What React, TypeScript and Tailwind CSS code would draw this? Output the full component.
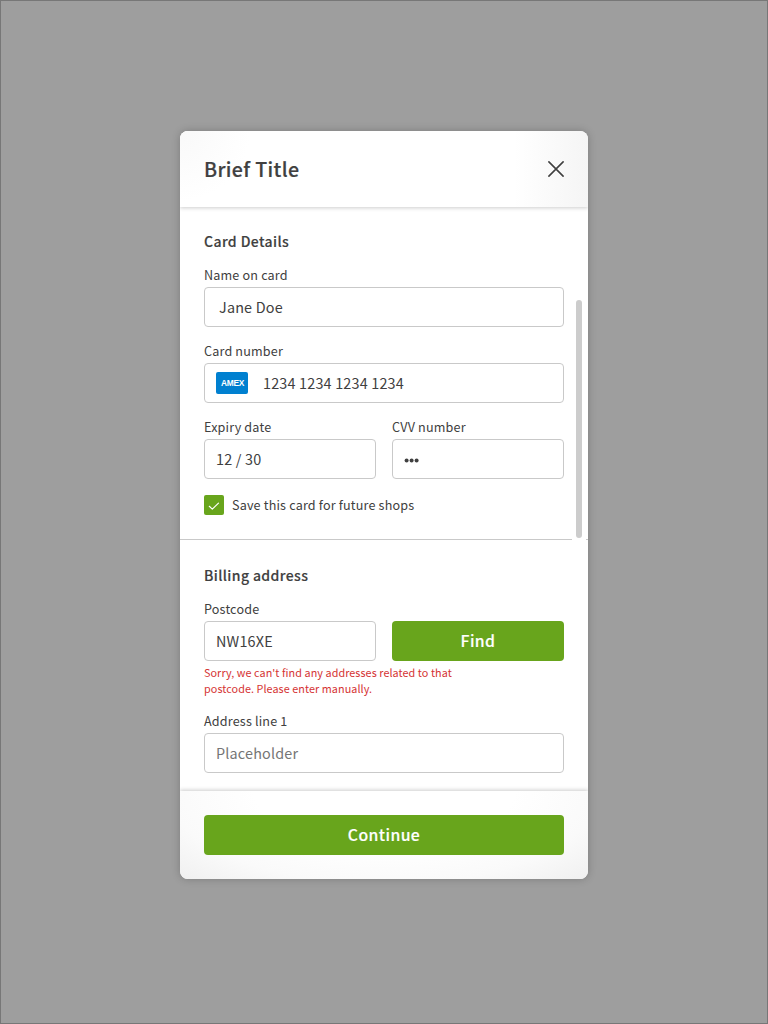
import type { ReactNode } from "react";

function Label({ children }: { children: ReactNode }) {
  return (
    <div className="h-[23px] text-[12.6px] leading-[22px] tracking-[0.17px] whitespace-nowrap">{children}</div>
  );
}

function Heading({ children }: { children: ReactNode }) {
  return (
    <h2 className="h-[35px] text-[14px] leading-6 font-medium tracking-[0.4px] [-webkit-text-stroke:0.15px_#404040]">
      {children}
    </h2>
  );
}

function Box({ children, className = "" }: { children: ReactNode; className?: string }) {
  return (
    <div
      className={`flex h-10 items-center rounded border border-[#c9c9c9] bg-white px-[11px] text-[14.4px] leading-[38px] tracking-[0.18px] whitespace-nowrap ${className}`}
    >
      {children}
    </div>
  );
}

function Button({ children }: { children: ReactNode }) {
  return (
    <button className="flex h-10 w-full items-start justify-center rounded bg-[#68a51c] text-[15.8px] leading-10 font-medium tracking-[0.4px] text-white [-webkit-text-stroke:0.15px_#fff]">
      {children}
    </button>
  );
}

export default function App() {
  return (
    <div className="flex h-[1024px] w-[768px] justify-center border border-[#777] bg-[#9e9e9e] pt-[130px] font-['Noto_Sans_CJK_SC',sans-serif] text-[#404040]">
      <div className="relative flex h-[748px] w-[408px] flex-col overflow-hidden rounded-lg bg-white shadow-[0_0_8px_rgba(0,0,0,0.22)]">
        <header className="relative z-10 flex h-[76px] shrink-0 items-center justify-between bg-[radial-gradient(circle_at_0_0,#f9f9f9_0,#fff_70px,transparent_70px),linear-gradient(90deg,#fff_82%,#f5f5f5)] px-6 shadow-[0_1px_4px_rgba(0,0,0,0.2)]">
          <h1 className="text-[19.6px] leading-8 font-medium tracking-[0.38px] [-webkit-text-stroke:0.2px_#404040]">Brief Title</h1>
          <svg className="h-4 w-4" viewBox="0 0 16 16" fill="none" stroke="#404040" strokeWidth="1.6" strokeLinecap="round">
            <path d="M.9.9 15.1 15.1M15.1.9.9 15.1" />
          </svg>
        </header>

        <section className="h-[333px] shrink-0 border-b border-[#c9c9c9] px-6 pt-[22px]">
          <Heading>Card Details</Heading>
          <Label>Name on card</Label>
          <Box className="pl-[14px]">Jane Doe</Box>
          <div className="h-[13px]" />
          <Label>Card number</Label>
          <Box>
            <span className="mr-[15px] flex h-[22px] w-8 items-center justify-center rounded-[2px] bg-[#0080d0] pl-px font-['Liberation_Sans',sans-serif] text-[8.4px] leading-none font-bold tracking-[-0.3px] text-white">
              AMEX
            </span>
            1234 1234 1234 1234
          </Box>
          <div className="mt-[13px] grid grid-cols-2 gap-4">
            <div>
              <Label>Expiry date</Label>
              <Box>12 / 30</Box>
            </div>
            <div>
              <Label>CVV number</Label>
              <Box>
                <svg className="mt-[2px] h-[5px] w-4" viewBox="0 0 16 5" fill="#404040">
                  <circle cx="2.6" cy="2.5" r="2" />
                  <circle cx="7.6" cy="2.5" r="2" />
                  <circle cx="12.6" cy="2.5" r="2" />
                </svg>
              </Box>
            </div>
          </div>
          <div className="mt-4 flex items-center">
            <span className="flex h-5 w-5 items-center justify-center rounded-[2px] bg-[#68a51c]">
              <svg className="h-5 w-5" viewBox="0 0 20 20" fill="none" stroke="#fff" strokeWidth="1.2" strokeLinecap="round" strokeLinejoin="round">
                <path d="m5.3 11.3 3 2.8 6.2-6" />
              </svg>
            </span>
            <span className="ml-2 text-[12.6px] leading-5 tracking-[0.17px] whitespace-nowrap">Save this card for future shops</span>
          </div>
        </section>

        <section className="grow px-6 pt-[23px]">
          <Heading>Billing address</Heading>
          <div className="grid grid-cols-2 items-end gap-4">
            <div>
              <Label>Postcode</Label>
              <Box>NW16XE</Box>
            </div>
            <Button>Find</Button>
          </div>
          <p className="mt-[3px] text-[10.8px] leading-4 tracking-[0.07px] whitespace-nowrap text-[#d53333]">
            Sorry, we can't find any addresses related to that
            <br />
            postcode. Please enter manually.
          </p>
          <div className="h-[14px]" />
          <Label>Address line 1</Label>
          <Box className="text-[#757575]">Placeholder</Box>
        </section>

        <footer className="relative z-10 h-[88px] shrink-0 bg-[radial-gradient(ellipse_at_50%_0,#fff_45%,#fafafa_75%,#f0f0f0)] px-6 pt-6 shadow-[0_-1px_4px_rgba(0,0,0,0.2)]">
          <Button>Continue</Button>
        </footer>

        <div className="absolute top-[157px] right-[2px] h-[260px] w-[14px] bg-white pt-3 pl-1">
          <div className="h-[237.5px] w-[6px] rounded-full bg-[#ccc]" />
        </div>
      </div>
    </div>
  );
}
